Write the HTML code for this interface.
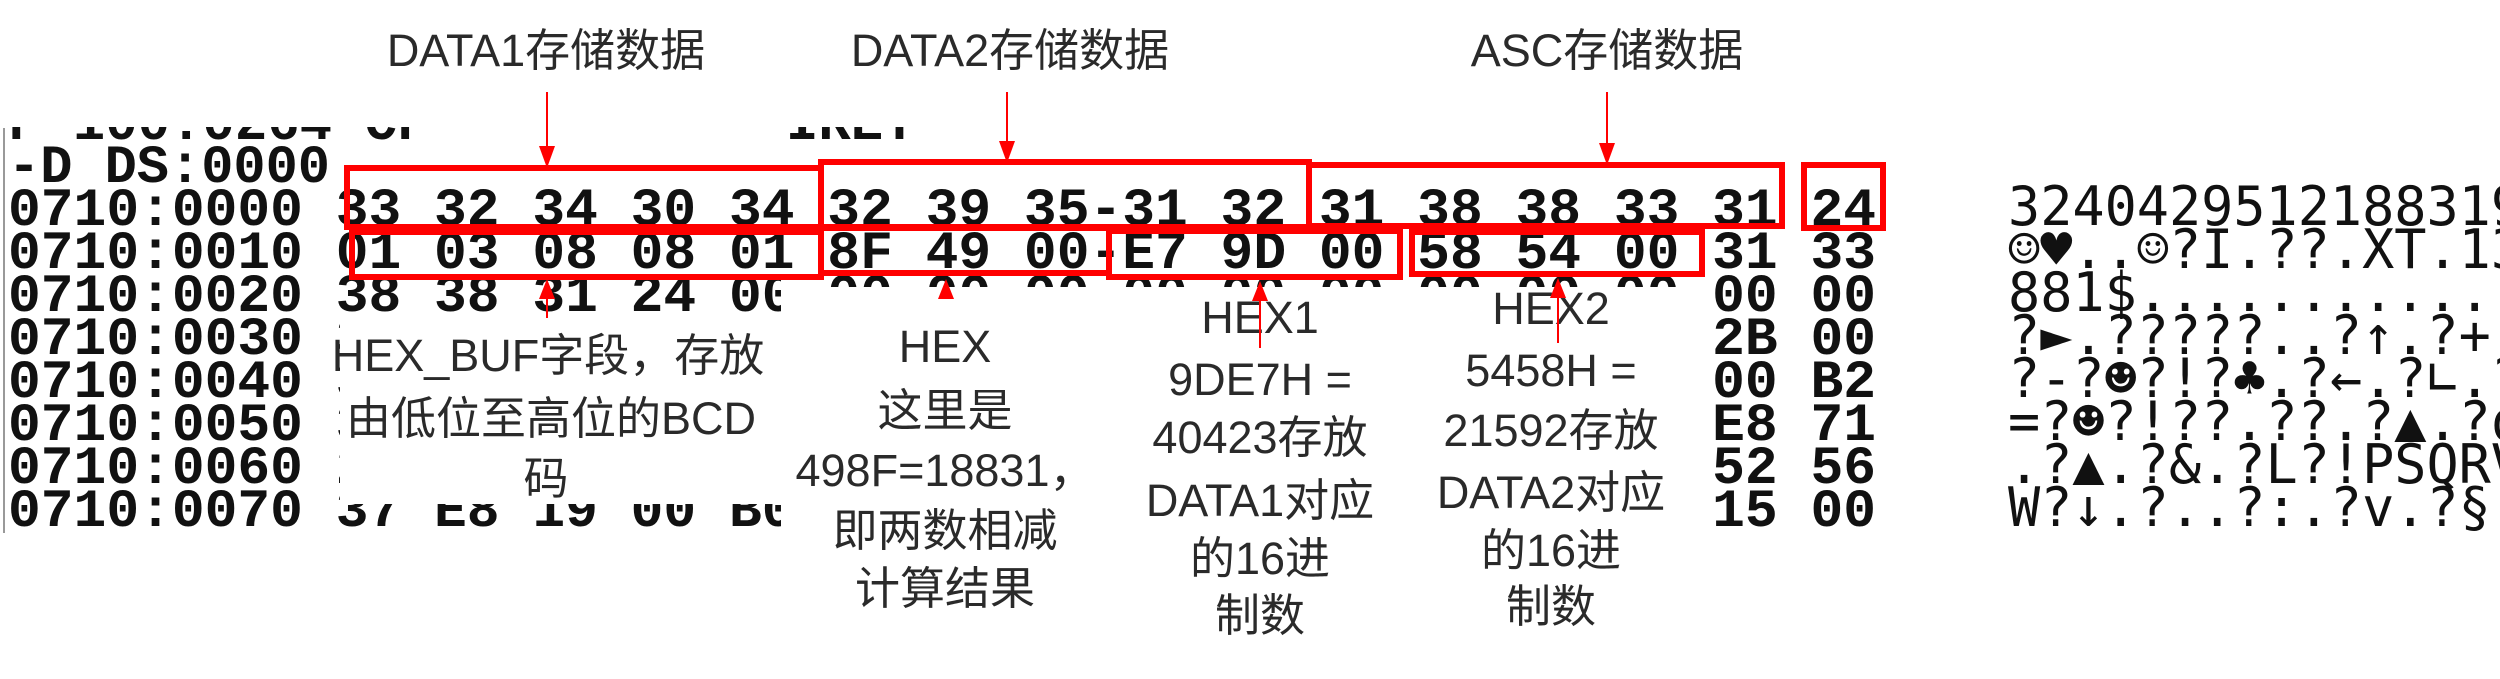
<!DOCTYPE html>
<html><head><meta charset="utf-8"><style>
html,body{margin:0;padding:0;background:#fff;}
svg{display:block;}
.m{font-family:"Liberation Mono","DejaVu Sans Mono",monospace;font-weight:bold;font-size:54px;fill:#111;}
.a{font-family:"DejaVu Sans Mono","Liberation Mono",monospace;font-size:54px;fill:#111;}
.t{font-family:"Liberation Sans","Noto Sans CJK SC",sans-serif;font-size:45px;fill:#2a2a2a;text-anchor:middle;}
</style></head><body>
<svg width="2500" height="679" viewBox="0 0 2500 679" xmlns="http://www.w3.org/2000/svg">
<rect width="2500" height="679" fill="#fff"/>
<defs><clipPath id="c"><rect x="0" y="127" width="1000" height="20"/></clipPath></defs>
<line x1="4" y1="128" x2="4" y2="533" stroke="#999" stroke-width="2"/>
<text class="m" x="8" y="139" clip-path="url(#c)">F 100:0264 CF</text>
<text class="m" x="786" y="139" clip-path="url(#c)">IRET</text>
<text class="m" x="8" y="182" textLength="322" lengthAdjust="spacingAndGlyphs">-D DS:0000</text>
<g class="m">
<text x="8" y="225" textLength="1868" lengthAdjust="spacingAndGlyphs">0710:0000  33 32 34 30 34 32 39 35-31 32 31 38 38 33 31 24</text>
<text x="8" y="268" textLength="1868" lengthAdjust="spacingAndGlyphs">0710:0010  01 03 08 08 01 8F 49 00-E7 9D 00 58 54 00 31 33</text>
<text x="8" y="311" textLength="1868" lengthAdjust="spacingAndGlyphs">0710:0020  38 38 31 24 00 00 00 00-00 00 00 00 00 00 00 00</text>
<text x="8" y="354" textLength="1868" lengthAdjust="spacingAndGlyphs">0710:0030  3F 10 2E 3F 3F 3F 3F 3F-2E 2E 3F 18 2E 3F 2B 00</text>
<text x="8" y="397" textLength="1868" lengthAdjust="spacingAndGlyphs">0710:0040  3F 2D 3F 02 3F 13 3F 05-2E 3F 1B 2E 3F 1C 00 B2</text>
<text x="8" y="440" textLength="1868" lengthAdjust="spacingAndGlyphs">0710:0050  3D 3F 02 3F 13 3F 3F 2E-3F 3F 2E 3F 1E 2E E8 71</text>
<text x="8" y="483" textLength="1868" lengthAdjust="spacingAndGlyphs">0710:0060  2E 3F 1E 2E 3F 26 2E 3F-4C 3F 13 50 53 51 52 56</text>
<text x="8" y="526" textLength="1868" lengthAdjust="spacingAndGlyphs">0710:0070  37 E8 19 00 B0 3F 2E 2E-3F 3A 2E 3F 76 2E 15 00</text>
</g>
<g class="a">
<text x="2008" y="225" textLength="515" lengthAdjust="spacingAndGlyphs">3240429512188319</text>
<text x="2008" y="268" textLength="515" lengthAdjust="spacingAndGlyphs">☺♥..☺?I.??.XT.13</text>
<text x="2008" y="311" textLength="515" lengthAdjust="spacingAndGlyphs">881$............</text>
<text x="2008" y="354" textLength="515" lengthAdjust="spacingAndGlyphs">?►.?????..?↑.?+.</text>
<text x="2008" y="397" textLength="515" lengthAdjust="spacingAndGlyphs">?-?☻?!?♣.?←.?∟.?</text>
<text x="2008" y="440" textLength="515" lengthAdjust="spacingAndGlyphs">=?☻?!??.??.?▲.?q</text>
<text x="2008" y="483" textLength="515" lengthAdjust="spacingAndGlyphs">.?▲.?&amp;.?L?!PSQRV</text>
<text x="2008" y="526" textLength="515" lengthAdjust="spacingAndGlyphs">W?↓.?..?:.?v.?§.</text>
</g>
<!-- white covers -->
<rect x="340" y="314" width="441" height="190" fill="#fff"/>
<rect x="781" y="270" width="40" height="409" fill="#fff"/>
<rect x="821" y="287" width="885" height="392" fill="#fff"/>
<rect x="340" y="530" width="441" height="149" fill="#fff"/>
<!-- titles -->
<text class="t" x="546" y="66">DATA1存储数据</text>
<text class="t" x="1010" y="66">DATA2存储数据</text>
<text class="t" x="1607" y="66">ASC存储数据</text>
<!-- annotations -->
<g class="t">
<text x="548" y="371">HEX_BUF字段，存放</text>
<text x="551" y="434">由低位至高位的BCD</text>
<text x="546" y="494">码</text>
<text x="945" y="362">HEX</text>
<text x="945" y="426">这里是</text>
<text x="945" y="486">498F=18831，</text>
<text x="945" y="546">即两数相减</text>
<text x="945" y="604">计算结果</text>
<text x="1260" y="333">HEX1</text>
<text x="1260" y="395">9DE7H =</text>
<text x="1260" y="453">40423存放</text>
<text x="1260" y="516">DATA1对应</text>
<text x="1260" y="574">的16进</text>
<text x="1260" y="631">制数</text>
<text x="1551" y="324">HEX2</text>
<text x="1551" y="386">5458H =</text>
<text x="1551" y="446">21592存放</text>
<text x="1551" y="508">DATA2对应</text>
<text x="1551" y="566">的16进</text>
<text x="1551" y="622">制数</text>
</g>
<!-- red boxes -->
<g fill="none" stroke="#f00" stroke-width="6">
<rect x="347" y="168" width="474" height="59"/>
<rect x="821" y="162" width="488" height="65"/>
<rect x="1309" y="165" width="473" height="61"/>
<rect x="1804" y="165" width="79" height="63"/>
<rect x="352" y="232" width="469" height="45"/>
<rect x="821" y="228" width="288" height="45"/>
<rect x="1109" y="231" width="291" height="46"/>
<rect x="1412" y="232" width="290" height="42"/>
</g>
<!-- arrows -->
<g stroke="#f00" stroke-width="2">
<line x1="547" y1="92" x2="547" y2="150"/>
<line x1="1007" y1="92" x2="1007" y2="145"/>
<line x1="1607" y1="92" x2="1607" y2="147"/>
<line x1="547" y1="295" x2="547" y2="318"/>
<line x1="1260" y1="295" x2="1260" y2="348"/>
<line x1="1558" y1="293" x2="1558" y2="343"/>
</g>
<g fill="#f00">
<polygon points="539,146 555,146 547,168"/>
<polygon points="999,141 1015,141 1007,163"/>
<polygon points="1599,143 1615,143 1607,165"/>
<polygon points="539,299 555,299 547,279"/>
<polygon points="938,299 954,299 946,279"/>
<polygon points="1252,301 1268,301 1260,281"/>
<polygon points="1550,298 1566,298 1558,278"/>
</g>
</svg>
</body></html>
